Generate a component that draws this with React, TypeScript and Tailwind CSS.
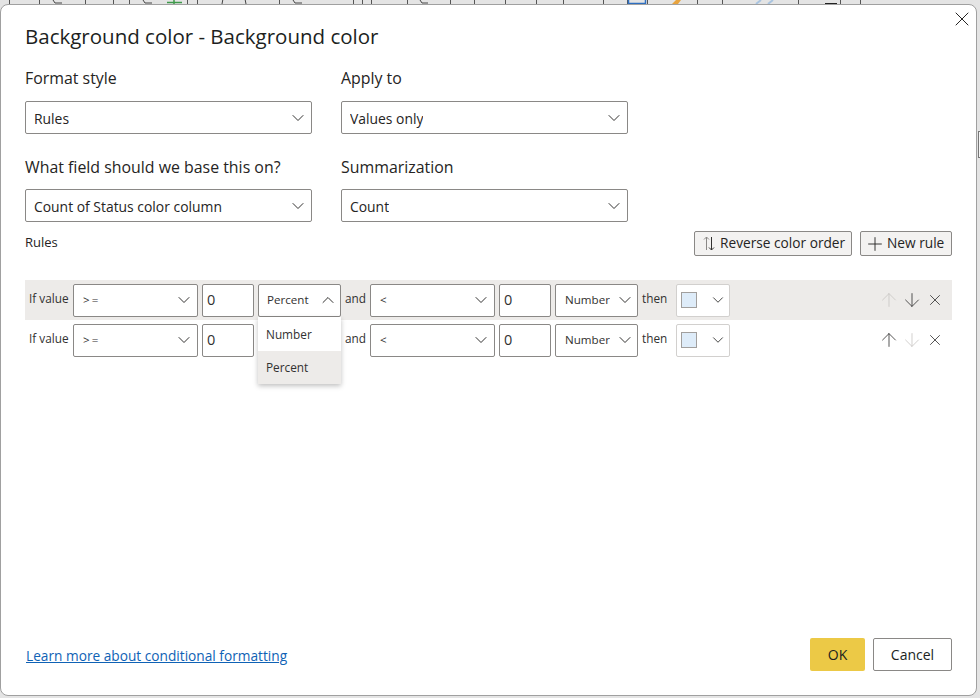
import { ChevronDown, ChevronUp, ArrowUp, ArrowDown, X, Plus } from 'lucide-react';

const font = 'font-["Open_Sans","Noto_Sans",sans-serif]';

const ribbonLines = [9, 39, 85, 113, 129, 187, 197, 279, 353, 362, 371, 407, 450, 474, 505, 536, 563, 603, 627, 647, 697, 722, 798, 840, 860];

function Select({ label, chevronUp, className, labelClass }: { label: string; chevronUp?: boolean; className: string; labelClass?: string }) {
  const Icon = chevronUp ? ChevronUp : ChevronDown;
  return (
    <div className={`flex items-center justify-between border border-[#8a8886] rounded-[2px] bg-white ${className}`}>
      <span className={`truncate ${labelClass ?? ''}`}>{label}</span>
      <Icon className="w-[20px] h-[20px] shrink-0 text-[#201f1e]" strokeWidth={1.1} />
    </div>
  );
}

function Field({ title, value, gap }: { title: string; value: string; gap: string }) {
  return (
    <div className="w-[287px]">
      <div className={`text-[15.9px] leading-[22px] text-[#252423] ${gap}`}>{title}</div>
      <Select label={value} labelClass="mt-[3px]" className="h-[33px] pl-[8px] pr-[3px] text-[13.9px] text-[#252423]" />
    </div>
  );
}

function Swatch() {
  return (
    <div className="w-[54px] h-[33px] flex items-center justify-between pl-[4px] pr-[2px] bg-white border border-[#d2d0ce] rounded-[2px] shrink-0">
      <div className="w-[16px] h-[16px] bg-[#deecf9] border border-[#a19f9d]" />
      <ChevronDown className="w-[18px] h-[18px] text-[#201f1e]" strokeWidth={1.1} />
    </div>
  );
}

function RuleRow({ unit, unitUp, unitCovered, upOff, downOff, shaded }: { unit: string; unitUp?: boolean; unitCovered?: boolean; upOff?: boolean; downOff?: boolean; shaded?: boolean }) {
  const ctl = 'h-[33px] border border-[#8a8886] rounded-[2px] bg-white text-[14.5px] flex items-center shrink-0';
  const sel = 'h-[33px] text-[11.6px] text-[#323130] shrink-0';
  return (
    <div className={`flex items-center h-[40px] text-[11.8px] text-[#323130] ${shaded ? 'bg-[#edebe9]' : ''}`}>
      <span className="ml-[4px] w-[44px] -mt-[3px]">If value</span>
      <Select label=">=" className={`${sel} w-[125px] pl-[9px] pr-[3px] tracking-[2px]`} />
      <div className={`${ctl} w-[52px] ml-[4px] pl-[4px]`}>0</div>
      {/* the open menu of the row above lies over this one */}
      <Select label={unit} chevronUp={unitUp} className={`${sel} w-[83px] ml-[4px] pl-[8px] pr-[2px] ${unitCovered ? 'invisible' : ''}`} />
      <span className="w-[29px] text-center -mt-[3px]">and</span>
      <Select label="<" className={`${sel} w-[125px] pl-[9px] pr-[3px]`} />
      <div className={`${ctl} w-[52px] ml-[4px] pl-[4px]`}>0</div>
      <Select label="Number" className={`${sel} w-[83px] ml-[4px] pl-[9px] pr-[2px]`} />
      <span className="w-[38px] pl-[4px] -mt-[3px]">then</span>
      <Swatch />
      <div className="flex-1" />
      <div className="flex items-center pr-[8px]">
        <ArrowUp className={`w-[22px] h-[22px] mr-[1px] ${upOff ? 'text-[#c8c6c4]' : 'text-[#323130]'}`} strokeWidth={0.9} />
        <ArrowDown className={`w-[22px] h-[22px] mr-[3px] ${downOff ? 'text-[#c8c6c4]' : 'text-[#323130]'}`} strokeWidth={0.9} />
        <X className="w-[18px] h-[18px] text-[#323130]" strokeWidth={1.1} />
      </div>
    </div>
  );
}

export default function App() {
  return (
    <div className={`relative w-[980px] h-[698px] overflow-hidden bg-[#e4e4e4] pt-[4px] pr-[3px] pb-[2px] ${font}`}>
      {/* ribbon behind the dialog */}
      <svg className="absolute left-0 top-0" width="980" height="6" fill="none" strokeWidth="1">
        {ribbonLines.map((x) => (
          <line key={x} x1={x + 0.5} x2={x + 0.5} y1="0" y2="6" stroke="#555" />
        ))}
        <path d="M53 0l2 3h7M143 0l2 3h7M293 0l2 3h7M420 0l2 3h6" stroke="#444" />
        <path d="M174 0v5M167 2.5h15" stroke="#3f9a4b" strokeWidth="1.5" />
        <path d="M222 4a11 11 0 0 1 24 0" stroke="#444" />
        <path d="M628.5 0v3.5h17V0" stroke="#2f6fc0" strokeWidth="1.5" />
        <path d="M672 4l4-4h5l-3 4z" fill="#e8a33d" />
        <path d="M756 4l5-4M768 4l5-4" stroke="#a9c4e0" strokeWidth="2" />
        <path d="M825 3.5h12" stroke="#222" />
      </svg>
      {/* scrollbar edge at the right of the window */}
      <div className="absolute right-0 top-[131px] w-[2px] h-[27px] border-y border-l border-[#777] bg-[#f5f5f5]" />
      <div className="relative h-full bg-white rounded-[8px] border border-[#a0a0a0] pt-[15px] pl-[24px] pr-[24px] flex flex-col">
        <X className="absolute right-[2px] top-[2px] w-[24px] h-[24px] text-[#252423]" strokeWidth={1} />
        <h1 className="text-[20.5px] leading-[32px] font-medium text-[#201f1e]">Background color - Background color</h1>

        <div className="flex gap-[29px] mt-[15px]">
          <Field title="Format style" value="Rules" gap="mb-[12px]" />
          <Field title="Apply to" value="Values only" gap="mb-[12px]" />
        </div>
        <div className="flex gap-[29px] mt-[22px]">
          <Field title="What field should we base this on?" value="Count of Status color column" gap="mb-[11px]" />
          <Field title="Summarization" value="Count" gap="mb-[11px]" />
        </div>

        <div className="flex items-start justify-between mt-[9px]">
          <span className="text-[13px] text-[#252423] leading-[22px]">Rules</span>
          <div className="flex gap-[8px] text-[13.7px] text-[#252423]">
            <div className="h-[25px] w-[158px] flex items-center pl-[8px] gap-[5px] bg-[#f3f2f1] border border-[#8a8886] rounded-[2px]">
              <svg width="12" height="15" viewBox="0 0 12 15" fill="none" stroke="#323130" strokeWidth="1">
                <path d="M3.5 14V1M1 3.5l2.5-2.5L6 3.5" stroke="#8a8886" />
                <path d="M8.5 1v13M6 11.5l2.5 2.5 2.5-2.5" />
              </svg>
              Reverse color order
            </div>
            <div className="h-[25px] w-[92px] flex items-center pl-[3px] gap-[1px] bg-[#f3f2f1] border border-[#8a8886] rounded-[2px]">
              <Plus className="w-[22px] h-[22px]" strokeWidth={1} />
              New rule
            </div>
          </div>
        </div>

        <div className="relative mt-[24px]">
          <RuleRow unit="Percent" unitUp upOff shaded />
          <RuleRow unit="Number" unitCovered downOff />
          <div className="absolute left-[233px] top-[37px] w-[83px] bg-white shadow-[0_2px_5px_rgba(0,0,0,0.25)] text-[11.8px] text-[#323130]">
            <div className="h-[34px] flex items-center pl-[8px] pt-[1px]">Number</div>
            <div className="h-[33px] flex items-center pl-[8px] bg-[#edebe9]">Percent</div>
          </div>
        </div>

        <div className="flex-1" />
        <div className="flex items-center justify-between pb-[24px]">
          <a className="text-[13.7px] text-[#0f62b5] underline mt-[4px] ml-[1px]">Learn more about conditional formatting</a>
          <div className="flex gap-[8px] text-[14px] text-[#201f1e]">
            <div className="w-[55px] h-[33px] flex items-center justify-center bg-[#ecc946] rounded-[2px]">OK</div>
            <div className="w-[79px] h-[33px] flex items-center justify-center bg-white border border-[#8a8886] rounded-[2px]">Cancel</div>
          </div>
        </div>
      </div>
    </div>
  );
}
